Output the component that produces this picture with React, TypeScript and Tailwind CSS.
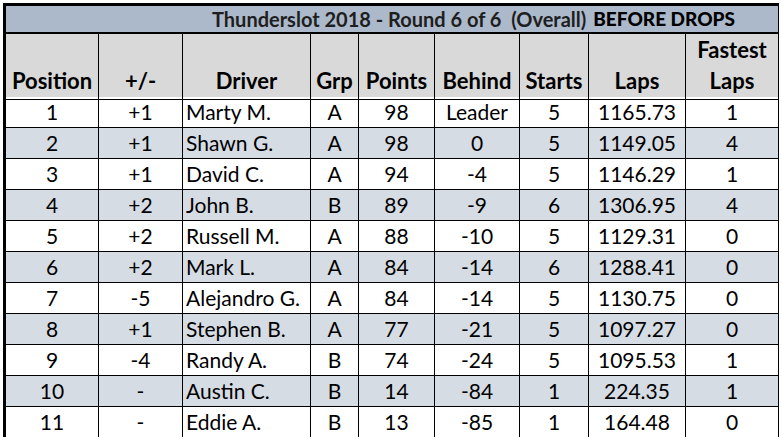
import React from "react";

interface Row {
  pos: string;
  delta: string;
  driver: string;
  grp: string;
  points: string;
  behind: string;
  starts: string;
  laps: string;
  fastest: string;
}

const rows: Row[] = [
  { pos: "1", delta: "+1", driver: "Marty M.", grp: "A", points: "98", behind: "Leader", starts: "5", laps: "1165.73", fastest: "1" },
  { pos: "2", delta: "+1", driver: "Shawn G.", grp: "A", points: "98", behind: "0", starts: "5", laps: "1149.05", fastest: "4" },
  { pos: "3", delta: "+1", driver: "David C.", grp: "A", points: "94", behind: "-4", starts: "5", laps: "1146.29", fastest: "1" },
  { pos: "4", delta: "+2", driver: "John B.", grp: "B", points: "89", behind: "-9", starts: "6", laps: "1306.95", fastest: "4" },
  { pos: "5", delta: "+2", driver: "Russell M.", grp: "A", points: "88", behind: "-10", starts: "5", laps: "1129.31", fastest: "0" },
  { pos: "6", delta: "+2", driver: "Mark L.", grp: "A", points: "84", behind: "-14", starts: "6", laps: "1288.41", fastest: "0" },
  { pos: "7", delta: "-5", driver: "Alejandro G.", grp: "A", points: "84", behind: "-14", starts: "5", laps: "1130.75", fastest: "0" },
  { pos: "8", delta: "+1", driver: "Stephen B.", grp: "A", points: "77", behind: "-21", starts: "5", laps: "1097.27", fastest: "0" },
  { pos: "9", delta: "-4", driver: "Randy A.", grp: "B", points: "74", behind: "-24", starts: "5", laps: "1095.53", fastest: "1" },
  { pos: "10", delta: "-", driver: "Austin C.", grp: "B", points: "14", behind: "-84", starts: "1", laps: "224.35", fastest: "1" },
  { pos: "11", delta: "-", driver: "Eddie A.", grp: "B", points: "13", behind: "-85", starts: "1", laps: "164.48", fastest: "0" },
];

const gridCols =
  "grid grid-cols-[93px_84px_128px_48px_76px_85px_69px_97px_93px]";

function HeaderCell({ children }: { children: React.ReactNode }) {
  return (
    <div className="flex items-end justify-center border-r border-b border-black pb-[3px] text-center leading-[31px]">
      <span>{children}</span>
    </div>
  );
}

export default function App() {
  return (
    <div
      className="h-[437px] w-[781px] overflow-hidden bg-white pl-[3px] pt-[3px] text-black"
      style={{ fontFamily: "Lato, 'Liberation Sans', sans-serif" }}
    >
      <div className="w-[776px] border-l-[3px] border-t-[3px] border-black">
        {/* title bar */}
        <div className="flex h-[28px] items-center border-r border-b-2 border-black bg-[#acb9ca] pl-[206px]">
          <span className="text-[20px] font-bold text-[#1e1e1e]">
            Thunderslot 2018 - Round 6 of 6&nbsp;&nbsp;(Overall)
          </span>
          <span className="ml-[7px] text-[19px] font-black">BEFORE DROPS</span>
        </div>

        {/* column headers */}
        <div className={`${gridCols} h-[63px] bg-[#d9d9d9] text-[22px] font-bold`}>
          <HeaderCell>Position</HeaderCell>
          <HeaderCell>+/-</HeaderCell>
          <HeaderCell>Driver</HeaderCell>
          <HeaderCell>Grp</HeaderCell>
          <HeaderCell>Points</HeaderCell>
          <HeaderCell>Behind</HeaderCell>
          <HeaderCell>Starts</HeaderCell>
          <HeaderCell>Laps</HeaderCell>
          <HeaderCell>
            Fastest
            <br />
            Laps
          </HeaderCell>
        </div>

        {/* data */}
        {rows.map((r, i) => (
          <div
            key={r.pos}
            className={`${gridCols} h-[31px] text-[21px] leading-[30px] ${
              i % 2 === 1 ? "bg-[#d6dce4]" : "bg-white"
            }`}
          >
            <div className="border-r border-b border-black text-center">{r.pos}</div>
            <div className="border-r border-b border-black text-center">{r.delta}</div>
            <div className="border-r border-b border-black pl-[3px]">{r.driver}</div>
            <div className="border-r border-b border-black text-center">{r.grp}</div>
            <div className="border-r border-b border-black text-center">{r.points}</div>
            <div className="border-r border-b border-black text-center">{r.behind}</div>
            <div className="border-r border-b border-black text-center">{r.starts}</div>
            <div className="border-r border-b border-black text-center">{r.laps}</div>
            <div className="border-r border-b border-black text-center">{r.fastest}</div>
          </div>
        ))}
      </div>
    </div>
  );
}
